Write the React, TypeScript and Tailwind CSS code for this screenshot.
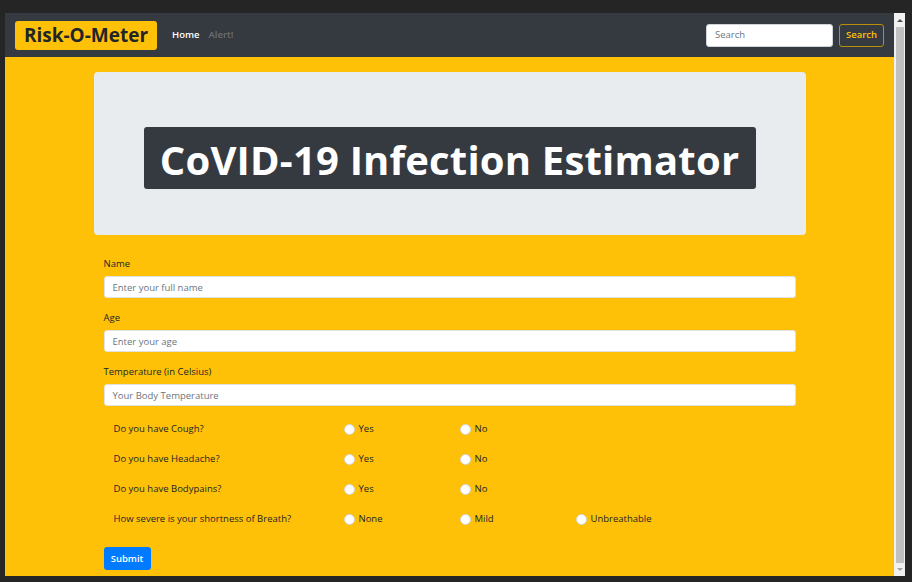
import React from 'react';

const font = { fontFamily: '"Open Sans", "Noto Sans", sans-serif' };

const questions = [
  { q: 'Do you have Cough?', opts: ['Yes', 'No'] },
  { q: 'Do you have Headache?', opts: ['Yes', 'No'] },
  { q: 'Do you have Bodypains?', opts: ['Yes', 'No'] },
  { q: 'How severe is your shortness of Breath?', opts: ['None', 'Mild', 'Unbreathable'] },
];

const fields = [
  { label: 'Name', placeholder: 'Enter your full name' },
  { label: 'Age', placeholder: 'Enter your age' },
  { label: 'Temperature (in Celsius)', placeholder: 'Your Body Temperature' },
];

const Radio: React.FC<{ label: string }> = ({ label }) => (
  <div className="w-[116px] flex items-center gap-[4px]">
    <span className="w-[11px] h-[11px] rounded-full bg-white border border-[#d5d5d5]" />
    <span className="text-[9.5px] text-[#212529] pt-[1px]">{label}</span>
  </div>
);

export default function App() {
  return (
    <div className="w-[912px] h-[582px] bg-[#252525] pt-[13px] pl-[5px] pr-[7px] pb-[6px] flex" style={font}>
      <div className="flex-1 flex flex-col bg-[#ffc107] overflow-hidden">
        {/* navbar */}
        <nav className="h-[44px] shrink-0 bg-[#343a40] flex items-center pl-[10px] pr-[10px]">
          <div className="h-[29px] w-[142px] rounded-[3px] bg-[#ffc107] flex items-center justify-center text-[19px] font-bold text-[#212529]">
            Risk-O-Meter
          </div>
          <div className="flex items-center gap-[9px] ml-[15px] text-[9.5px] font-semibold">
            <span className="text-white">Home</span>
            <span className="text-[#6c7075]">Alert!</span>
          </div>
          <div className="ml-auto flex items-center gap-[6px]">
            <div className="w-[127px] h-[23px] bg-white rounded-[3px] border border-[#ced4da] flex items-center pl-[8px] text-[9.5px] text-[#6c757d]">
              Search
            </div>
            <div className="w-[45px] h-[23px] rounded-[3px] border border-[#b8900c] flex items-center justify-center text-[9.5px] font-semibold text-[#ffc107]">
              Search
            </div>
          </div>
        </nav>

        {/* main */}
        <div className="w-[712px] mx-auto mt-[15px]">
          <div className="h-[163px] rounded-[4px] bg-[#e9ecef] flex justify-center pt-[55px]">
            <h1 className="w-[612px] h-[62px] rounded-[3px] bg-[#343a40] text-white text-[40px] tracking-[0.2px] font-bold flex items-center justify-center pt-[4px]">
              CoVID-19 Infection Estimator
            </h1>
          </div>

          <form className="px-[10px] pt-[22px]">
            {fields.map((f) => (
              <div key={f.label} className="mb-[13px]">
                <div className="h-[13px] flex items-center text-[9.5px] text-[#212529] mb-[6px] pt-[2px]">{f.label}</div>
                <div className="h-[22px] bg-white rounded-[3px] border border-[#e2e2e2] flex items-center pl-[8px] pt-[2px] text-[9.5px] text-[#6c757d]">
                  {f.placeholder}
                </div>
              </div>
            ))}
            <div className="-mt-[5px]">
              {questions.map((r) => (
                <div key={r.q} className="h-[30px] flex items-center pl-[10px]">
                  <span className="w-[230px] text-[9.5px] text-[#212529] pt-[1px]">{r.q}</span>
                  {r.opts.map((o) => (
                    <Radio key={o} label={o} />
                  ))}
                </div>
              ))}
            </div>
            <button
              type="button"
              className="mt-[13px] w-[47px] h-[23px] rounded-[3px] bg-[#007bff] text-white text-[9.5px] font-semibold pt-[1px]"
            >
              Submit
            </button>
          </form>
        </div>
      </div>

      {/* scrollbar */}
      <div className="w-[11px] bg-[#f1f1f1] flex flex-col items-center">
        <div className="h-[14px] flex items-center justify-center">
          <div className="w-0 h-0 border-l-[3px] border-r-[3px] border-b-[3px] border-l-transparent border-r-transparent border-b-[#505050]" />
        </div>
        <div className="flex-1 w-[8px] bg-[#c1c1c1]" />
        <div className="h-[13px] flex items-center justify-center">
          <div className="w-0 h-0 border-l-[3px] border-r-[3px] border-t-[3px] border-l-transparent border-r-transparent border-t-[#a3a3a3]" />
        </div>
      </div>
    </div>
  );
}
